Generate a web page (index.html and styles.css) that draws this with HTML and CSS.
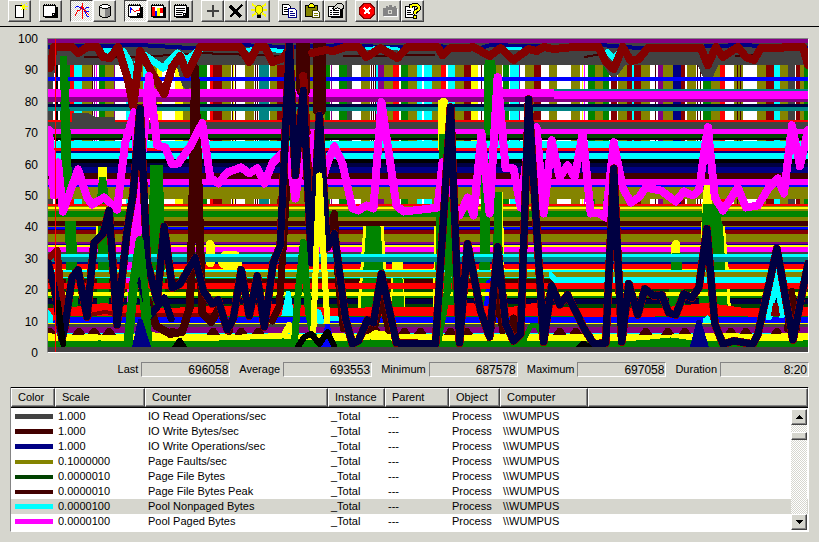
FILE: index.html
```html
<!DOCTYPE html>
<html lang="en">
<head>
  <meta charset="UTF-8">
  <meta name="viewport" content="width=device-width, initial-scale=1.0">
  <title>System Monitor</title>
  <link rel="stylesheet" href="styles.css">
</head>
<body>
  <div class="toolbar">
    <div class="group">
      <button aria-label="New counter set"><svg viewBox="0 0 16 16"><path fill="#fff" stroke="#000" d="M3.500 2.500h8v12h-8z"/><path fill="#ff0" d="M8 3h2v1H8zM10 2h2v4h-2zM12 1h1v6h-1zM13 3h3v1h-3zM9 0h1v1H9zM14 0h1v1h-1zM9 6h1v1H9zM14 6h1v1h-1z"/></svg></button>
    </div>
    <div class="group">
      <button aria-label="Clear display"><svg viewBox="0 0 16 16"><path d="M2 4h13v11H2z"/><path fill="#fff" stroke="#000" d="M.5 2.500h12v8l-3 3h-9z"/><path fill="none" stroke="#000" d="M9.500 13v-3h3"/><path stroke="#000" stroke-width="2" stroke-dasharray="1 1" d="M1 2h12"/></svg></button>
    </div>
    <div class="group">
      <button class="pressed" aria-label="View current activity"><svg viewBox="0 0 16 16"><path fill="none" stroke="#00f" d="M1 5l2-2 4 2 3 2 3 6 2 0M10 7l3-3 2 1M10 8l5 0"/><path fill="none" stroke="#f00" d="M1 13l3-6 2 0 2-4 4 6 3 3"/><path fill="#f00" d="M8 0h1v16H8z"/></svg></button>
      <button aria-label="View log data"><svg viewBox="0 0 16 16"><path fill="#848484" stroke="#000" d="M2.500 3.500l3-2h5l3 2v9l-3 2h-5l-3-2z"/><path fill="#d6d6ce" d="M3 5h5v9H5l-2-2z"/><path fill="#fff" stroke="#000" d="M2.500 3.500l3-2h5l3 2-3 2h-5z"/></svg></button>
    </div>
    <div class="group">
      <button class="pressed" aria-label="View graph"><svg viewBox="0 0 16 16"><path d="M2 4h13v11H2z"/><path fill="#fff" stroke="#000" d="M.5 2.500h12v8l-3 3h-9z"/><path fill="none" stroke="#000" d="M9.500 13v-3h3"/><path stroke="#000" stroke-width="2" stroke-dasharray="1 1" d="M1 2h12"/><path fill="none" stroke="#00f" d="M2.500 10V5l2 2"/><path fill="none" stroke="#f00" d="M4 6l3 3 2-2 2 1 1-3"/></svg></button>
      <button aria-label="View histogram"><svg viewBox="0 0 16 16"><path d="M2 4h13v11H2z"/><path fill="#fff" stroke="#000" d="M.5 2.500h12v11H.5z"/><path stroke="#000" stroke-width="2" stroke-dasharray="1 1" d="M1 2h12"/><path fill="#f00" d="M1 4h3v9H1zM9 5h3v5H9z"/><path fill="#00f" d="M4 8h2v5H4z"/><path fill="#ff0" d="M6 5h3v8H6z"/></svg></button>
      <button aria-label="View report"><svg viewBox="0 0 16 16"><path d="M2 4h13v11H2z"/><path fill="#fff" stroke="#000" d="M.5 2.500h12v8l-3 3h-9z"/><path fill="none" stroke="#000" d="M9.500 13v-3h3M2 5.500h9M2 7.500h9M2 9.500h7M2 11.500h6"/><path stroke="#000" stroke-width="2" stroke-dasharray="1 1" d="M1 2h12"/></svg></button>
    </div>
    <div class="group">
      <button aria-label="Add"><svg viewBox="0 0 16 16"><path fill="#424242" d="M7 2h2v5h5v2H9v5H7V9H2V7h5z"/></svg></button>
      <button aria-label="Delete"><svg viewBox="0 0 16 16"><path stroke="#000" stroke-width="3" d="M2 3l11 11"/><path stroke="#000" stroke-width="2" d="M14 2L8 8l-6 6"/></svg></button>
      <button aria-label="Highlight"><svg viewBox="0 0 16 16"><path stroke="#ff0" stroke-width="2" d="M1 1l4 3M15 1l-4 3M0 7h4M12 7h4M1 13l4-3M15 13l-4-3"/><path fill="#ff0" stroke="#848400" d="M4.500 4.500l2-2h3l2 2v4l-2 2v1h-3v-1l-2-2z"/><path d="M6 12h4v3H6z"/></svg></button>
    </div>
    <div class="group">
      <button aria-label="Copy properties"><svg viewBox="0 0 16 16"><path fill="#fff" stroke="#000" d="M.5 1.500h6l2 2v8h-8z"/><path stroke="#000" d="M2 4.500h3M2 6.500h5M2 8.500h5"/><path fill="#fff" stroke="#000084" d="M6.500 5.500h6l2 2v7h-8z"/><path stroke="#000084" d="M8 8.500h3M8 10.500h5M8 12.500h5"/></svg></button>
      <button aria-label="Paste counter list"><svg viewBox="0 0 16 16"><path fill="#848400" stroke="#000" d="M.5 2.500h12v11H.5z"/><path fill="#ff0" stroke="#000" d="M3.500 3.500v-1l2-2h2l2 2v2h-6z"/><path fill="#fff" stroke="#424200" d="M7.500 7.500h5l2 2v5h-7z"/><path stroke="#848400" d="M9 10.500h4M9 12.500h4"/></svg></button>
      <button aria-label="Properties"><svg viewBox="0 0 16 16"><path d="M3 5h12v10H3z"/><path fill="#fff" stroke="#000" d="M.5 3.500h12v10H.5z"/><path stroke="#000" d="M2 7.500h2M5 7.500h6M2 9.500h2M5 9.500h6M2 11.500h2M5 11.500h6"/><path fill="#d6d6ce" stroke="#000" d="M4.500 5.500l5-5h4l2 2v3l-3 1-3-2-3 2z"/></svg></button>
    </div>
    <div class="group">
      <button aria-label="Freeze display"><svg viewBox="0 0 16 16"><path fill="#f00" stroke="#840000" d="M5 .5h6L15.500 5v6L11 15.500H5L.5 11V5z"/><path stroke="#fff" stroke-width="2" d="M5 5l6 6M11 5l-6 6"/></svg></button>
      <button aria-label="Update data" disabled><svg viewBox="0 0 16 16"><path fill="#fff" d="M2 6h14v8H2z"/><path fill="#848484" d="M1 5h3V3h2v1h1V2h3v2h2V3h2v2h1v8H1z"/><path fill="#d6d6ce" d="M6 7h4v4H6z"/><path fill="#848484" d="M7 8h2v2H7z"/></svg></button>
      <button aria-label="Help"><svg viewBox="0 0 16 16"><path fill="#fff" stroke="#000" d="M.5 3.500h9v11h-9z"/><path stroke="#000" d="M2 7.500h4M2 9.500h4M2 11.500h6"/><path fill="none" stroke="#000" stroke-width="4" d="M6 5V3l2-1h4l2 2v2l-4 3v2"/><path fill="none" stroke="#ff0" stroke-width="2" d="M6 5V3l2-1h4l2 2v2l-4 3v2"/><path fill="#ff0" stroke="#000" d="M8.500 12.500h3v3h-3z"/></svg></button>
    </div>
  </div>

  <main class="monitor">
    <div class="chart">
      <div class="axis">
        <span>100</span><span>90</span><span>80</span><span>70</span><span>60</span><span>50</span><span>40</span><span>30</span><span>20</span><span>10</span><span>0</span>
      </div>
      <div class="plot">
        <svg id="graph" viewBox="48 39 759 312" preserveAspectRatio="none" role="img" aria-label="Counter graph"></svg>
      </div>
    </div>

    <div class="stats">
      <label for="last">Last</label><output id="last">696058</output>
      <label for="average">Average</label><output id="average">693553</output>
      <label for="minimum">Minimum</label><output id="minimum">687578</output>
      <label for="maximum">Maximum</label><output id="maximum">697058</output>
      <label for="duration">Duration</label><output id="duration">8:20</output>
    </div>

    <div class="legend">
      <table>
        <colgroup>
          <col class="c-color"><col class="c-scale"><col class="c-counter"><col class="c-instance"><col class="c-parent"><col class="c-object"><col class="c-computer"><col>
        </colgroup>
        <thead>
          <tr><th>Color</th><th>Scale</th><th>Counter</th><th>Instance</th><th>Parent</th><th>Object</th><th>Computer</th><th></th></tr>
        </thead>
        <tbody>
          <tr><td><i class="key gray"></i></td><td>1.000</td><td>IO Read Operations/sec</td><td>_Total</td><td>---</td><td>Process</td><td>\\WUMPUS</td><td></td></tr>
          <tr><td><i class="key maroon"></i></td><td>1.000</td><td>IO Write Bytes/sec</td><td>_Total</td><td>---</td><td>Process</td><td>\\WUMPUS</td><td></td></tr>
          <tr><td><i class="key navy"></i></td><td>1.000</td><td>IO Write Operations/sec</td><td>_Total</td><td>---</td><td>Process</td><td>\\WUMPUS</td><td></td></tr>
          <tr><td><i class="key thin olive"></i></td><td>0.1000000</td><td>Page Faults/sec</td><td>_Total</td><td>---</td><td>Process</td><td>\\WUMPUS</td><td></td></tr>
          <tr><td><i class="key thin green"></i></td><td>0.0000010</td><td>Page File Bytes</td><td>_Total</td><td>---</td><td>Process</td><td>\\WUMPUS</td><td></td></tr>
          <tr><td><i class="key thin maroon"></i></td><td>0.0000010</td><td>Page File Bytes Peak</td><td>_Total</td><td>---</td><td>Process</td><td>\\WUMPUS</td><td></td></tr>
          <tr class="selected"><td><i class="key cyan"></i></td><td>0.0000100</td><td>Pool Nonpaged Bytes</td><td>_Total</td><td>---</td><td>Process</td><td>\\WUMPUS</td><td></td></tr>
          <tr><td><i class="key magenta"></i></td><td>0.0000100</td><td>Pool Paged Bytes</td><td>_Total</td><td>---</td><td>Process</td><td>\\WUMPUS</td><td></td></tr>
        </tbody>
      </table>
      <div class="scrollbar">
        <button aria-label="Scroll up"><svg viewBox="0 0 7 4"><path d="M3 0h1v1h1v1h1v1h1v1H0V3h1V2h1V1h1z"/></svg></button>
        <div class="track"><div class="thumb"></div></div>
        <button aria-label="Scroll down"><svg viewBox="0 0 7 4"><path d="M0 0h7v1H6v1H5v1H4v1H3V3H2V2H1V1H0z"/></svg></button>
      </div>
    </div>
  </main>
  <script src="graph.js"></script>
</body>
</html>
```
FILE: styles.css
```css
* { box-sizing: border-box; }
body { margin: 0; height: 100vh; min-height: 420px; display: flex; flex-direction: column; background: #d6d6ce; color: #000; font: 11px/15px "Liberation Sans", Arial, sans-serif; }
svg { display: block; shape-rendering: crispEdges; }

.toolbar { display: flex; gap: 8px; height: 27px; padding-left: 8px; border-bottom: 1px solid #000; flex: none; }
.group { display: flex; }
.toolbar button { width: 23px; height: 22px; padding: 2px; border: 1px solid; border-color: #fff #424242 #424242 #fff; box-shadow: inset -1px -1px #848484; background: #d6d6ce; }
.toolbar button svg { width: 16px; height: 16px; margin: 0 auto; }
.toolbar .pressed { border-color: #424242 #fff #fff #424242; box-shadow: none; background: repeating-conic-gradient(#fff 0 25%, #d6d6ce 0 50%) 0 0 / 2px 2px; }

.monitor { flex: 1; min-height: 0; display: flex; flex-direction: column; padding: 11px 10px 10px; }
.chart { flex: 1; min-height: 0; display: flex; gap: 9px; }
.axis { width: 28px; margin: -5px 0 -6px; display: flex; flex-direction: column; justify-content: space-between; text-align: right; line-height: 12px; font-size: 12px; }
.plot { flex: 1; min-width: 0; border: 1px solid; border-color: #848484 #fff #fff #848484; }
.plot svg { width: 100%; height: 100%; background: #fff; }

.stats { display: flex; justify-content: flex-end; margin: 9px 0 10px; }
.stats label { margin: 0 3px 0 9px; white-space: nowrap; }
.stats output { width: 89px; height: 15px; padding-right: 1px; border: 1px solid; border-color: #848484 #fff #fff #848484; text-align: right; line-height: 14px; font-size: 12px; }

.legend { position: relative; border: 1px solid; border-color: #848484 #fff #fff #848484; background: #fff; padding-bottom: 2px; }
table { width: 100%; border-collapse: separate; border-spacing: 0; table-layout: fixed; }
th { height: 19px; padding: 0 6px; border: 1px solid; border-color: #fff #424242 #424242 #fff; box-shadow: inset -1px -1px #848484, 0 -1px #000, 0 1px #000; background: #d6d6ce; font-weight: normal; text-align: left; line-height: 15px; }
tbody::before { content: ""; display: block; height: 2px; }
td { height: 15px; padding: 0 3px; white-space: nowrap; }
.selected td { background: #d6d6ce; }
.c-color { width: 44px; }
.c-scale { width: 90px; }
.c-counter { width: 183px; }
.c-instance { width: 57px; }
.c-parent { width: 64px; }
.c-object { width: 51px; }
.c-computer { width: 88px; }
.key { display: block; width: 38px; height: 5px; margin-left: 1px; }
.thin { height: 4px; }
.gray { background: #424242; }
.maroon { background: #420000; }
.navy { background: #000084; }
.olive { background: #848400; }
.green { background: #004200; }
.cyan { background: #0ff; }
.magenta { background: #f0f; }

.scrollbar { position: absolute; top: 21px; right: 1px; bottom: 1px; width: 16px; display: flex; flex-direction: column; }
.scrollbar button, .thumb { border: 1px solid; border-color: #fff #424242 #424242 #fff; box-shadow: inset -1px -1px #848484; background: #d6d6ce; }
.scrollbar button { height: 16px; padding: 0; }
.scrollbar button svg { width: 7px; height: 4px; margin: 0 auto; }
.track { flex: 1; padding-top: 7px; background: repeating-conic-gradient(#fff 0 25%, #d6d6ce 0 50%) 0 0 / 2px 2px; }
.thumb { height: 8px; }
```
FILE: graph.js
```js
const C = {
  gray: '#424242', maroon: '#420000', red: '#ff0000', darkred: '#840000', navy: '#000084', ink: '#000042',
  blue: '#0000ff', cyan: '#00ffff', teal: '#008484', olive: '#848400', green: '#008400', forest: '#004200',
  yellow: '#ffff00', magenta: '#ff00ff', purple: '#840084', black: '#000000', white: '#ffffff'
};
const graph = document.getElementById('graph');

function add(tag, attrs) {
  const el = document.createElementNS('http://www.w3.org/2000/svg', tag);
  for (const key in attrs) el.setAttribute(key, attrs[key]);
  graph.appendChild(el);
}
function rect(color, x1, x2, y1, y2) {
  add('rect', { x: x1, y: y1, width: x2 - x1, height: y2 - y1, fill: C[color] });
}
function line(color, width, points) {
  add('polyline', { points, fill: 'none', stroke: C[color], 'stroke-width': width, 'stroke-linejoin': 'round', 'stroke-linecap': 'round' });
}
function area(color, points) {
  add('polygon', { points, fill: C[color] });
}

// spiky counters that run off the scale: color, from x, to x
const bars = [
  ['gray', 48, 53], ['black', 56, 58], ['green', 60, 70], ['red', 70, 74], ['cyan', 74, 82], ['olive', 82, 92],
  ['maroon', 92, 93], ['purple', 94, 95], ['magenta', 96, 97], ['green', 99, 105], ['olive', 105, 114], ['purple', 114, 115],
  ['cyan', 126, 134], ['olive', 134, 143], ['cyan', 143, 148], ['olive', 150, 160], ['yellow', 157, 162],
  ['yellow', 175, 183], ['olive', 183, 194], ['green', 199, 207], ['red', 210, 213], ['darkred', 213, 222], ['olive', 222, 231],
  ['maroon', 232, 233], ['yellow', 233, 234], ['maroon', 235, 236], ['olive', 245, 254], ['maroon', 255, 256], ['maroon', 257, 258],
  ['teal', 259, 269], ['olive', 270, 277], ['darkred', 277, 284], ['olive', 284, 325], ['green', 325, 330], ['purple', 331, 332],
  ['green', 339, 347], ['gray', 347, 352], ['olive', 361, 370], ['maroon', 371, 372], ['maroon', 373, 374], ['maroon', 375, 376],
  ['cyan', 376, 378], ['purple', 378, 384], ['olive', 384, 393], ['red', 393, 399], ['green', 401, 408], ['olive', 408, 417],
  ['cyan', 417, 422], ['cyan', 424, 431], ['olive', 431, 440], ['red', 440, 445], ['cyan', 447, 454], ['olive', 454, 463],
  ['darkred', 463, 470], ['yellow', 470, 477], ['maroon', 480, 481], ['green', 483, 495], ['olive', 495, 501], ['green', 502, 508],
  ['cyan', 509, 518], ['purple', 518, 519], ['olive', 524, 533], ['darkred', 533, 540], ['olive', 548, 556], ['olive', 570, 579],
  ['yellow', 581, 582], ['magenta', 583, 584], ['green', 587, 594], ['olive', 594, 602], ['green', 602, 608], ['darkred', 610, 616],
  ['olive', 617, 626], ['darkred', 626, 640], ['cyan', 631, 633], ['olive', 640, 649], ['maroon', 654, 655], ['purple', 657, 662],
  ['olive', 662, 672], ['navy', 672, 680], ['darkred', 680, 684], ['olive', 686, 695], ['maroon', 696, 697], ['maroon', 699, 700],
  ['green', 702, 710], ['olive', 710, 719], ['red', 719, 724], ['olive', 733, 742], ['maroon', 736, 737], ['maroon', 739, 740],
  ['olive', 756, 765], ['darkred', 765, 773], ['cyan', 773, 779], ['olive', 779, 787], ['gray', 787, 794], ['darkred', 795, 799],
  ['olive', 799, 803], ['green', 803, 807]
];

// flat counters: color, from y, to y
const bands = [
  ['purple', 39, 43], ['gray', 43, 65], ['blue', 77, 81], ['magenta', 89, 97], ['purple', 97, 102], ['ink', 104, 107],
  ['teal', 107, 111], ['red', 120, 122], ['gray', 122, 129], ['magenta', 129, 134], ['forest', 134, 138], ['black', 138, 140],
  ['cyan', 141, 148], ['red', 148, 151], ['navy', 151, 153], ['cyan', 153, 159], ['black', 159, 163], ['ink', 163, 167],
  ['navy', 167, 173], ['maroon', 173, 179], ['magenta', 179, 185], ['blue', 185, 187], ['olive', 187, 198], ['red', 203, 205],
  ['olive', 205, 210], ['yellow', 206, 208], ['green', 210, 216], ['olive', 216, 220], ['maroon', 220, 225], ['olive', 225, 226],
  ['blue', 226, 228], ['navy', 228, 229], ['darkred', 229, 233], ['olive', 233, 241], ['purple', 241, 243], ['navy', 243, 244],
  ['yellow', 244, 246], ['magenta', 246, 251], ['gray', 251, 253], ['navy', 261, 263], ['red', 263, 268], ['yellow', 268, 271],
  ['green', 276, 278], ['maroon', 278, 282], ['forest', 288, 291], ['green', 295, 297], ['black', 297, 298], ['ink', 298, 303],
  ['forest', 303, 307]
];
const frontBands = [
  ['cyan', 253, 256], ['teal', 256, 261], ['cyan', 269, 271], ['olive', 271, 276], ['cyan', 276, 277], ['red', 282, 288],
  ['yellow', 291, 295], ['red', 307, 315], ['green', 315, 316], ['blue', 316, 322], ['yellow', 322, 323], ['gray', 323, 326],
  ['purple', 326, 332], ['cyan', 332, 334], ['yellow', 333, 340], ['green', 340, 346]
];

bars.forEach(([color, x1, x2]) => rect(color, x1, x2, 65, 203));
line('gray', 10, '48,80 52,60');
line('gray', 10, '180,60 187,84 196,60');
line('gray', 10, '605,60 613,72 622,60');
line('gray', 10, '700,60 707,76 714,60');
bands.forEach(([color, y1, y2]) => rect(color, 48, 807, y1, y2));
rect('teal', 553, 807, 89, 91);
rect('magenta', 553, 807, 91, 99);
area('gray', '72,113 88,113 96,117 115,117 115,122 72,122');
line('navy', 4, '48,47 100,46 140,45 190,48 240,45 283,47 350,45 380,47 430,46 480,48 490,45 560,47 600,45 650,49 690,47 740,45 807,48');
line('maroon', 2, '85,57 140,57 200,53 280,56');
line('maroon', 2, '343,56 434,55');
line('maroon', 2, '584,57 600,54');
line('maroon', 2, '735,56 760,54');
line('cyan', 7, '106,51 123,51 129,62 134,80 140,52 150,59 163,68 177,53 187,60 200,49');
line('cyan', 4, '240,50 258,49 283,51');
line('cyan', 3, '365,49 381,47 398,49');
line('cyan', 3, '505,49 520,48');
line('cyan', 6, '607,52 613,58 619,52');
line('cyan', 4, '701,50 707,60 714,50');

// mid range counters sitting behind the flat ones
area('green', '60,56 67,56 71,140 72,195 62,195');
area('green', '65,220 76,220 78,310 67,310');
area('yellow', '98,167 107,167 107,180 98,180');
area('green', '99,177 106,177 109,198 97,198');
area('yellow', '96,225 98,225 97,250 95,250');
area('green', '98,225 108,225 109,310 97,310');
area('green', '150,165 163,165 165,310 147,310');
area('magenta', '134,190 144,190 142,230 127,310 126,268');
area('yellow', '363,225 383,225 389,310 357,310');
area('green', '366,225 380,225 386,310 360,310');
area('yellow', '392,261 402,261 405,310 389,310');
area('green', '393,277 402,277 404,310 391,310');
area('yellow', '434,225 440,225 440,310 432,310');
area('green', '436,200 457,200 458,310 434,310');
area('green', '481,160 489,160 490,310 478,310');
area('green', '484,60 494,60 494,135 483,135');
area('yellow', '495,192 502,192 505,310 493,310');
area('green', '494,192 501,192 503,310 491,310');
area('yellow', '438,100 447,100 447,150 437,150');
line('yellow', 9, '443,102 443,145');
area('green', '438,134 447,134 447,170 438,170');
line('yellow', 9, '210,244 210,262');
line('yellow', 12, '226,256 234,256 236,262 224,262');
line('yellow', 9, '675,244 675,264');
area('green', '671,252 680,252 685,310 667,310');
area('yellow', '703,185 710,185 712,225 724,225 728,271 730,310 698,310 701,210');
area('green', '702,203 716,203 722,225 727,310 698,310');
area('blue', '486,280 491,277 492,310 483,310');

frontBands.forEach(([color, y1, y2]) => rect(color, 48, 807, y1, y2));
area('cyan', '548,269 556,276 807,276 807,282 553,282 548,276');

// activity near the bottom of the scale
line('red', 8, '50,318 58,308 75,310 90,308 105,306 118,309 135,308 160,312 190,310 230,309 290,307 330,311 430,310 470,306 500,312 535,306 580,312 650,312 706,306 750,312 807,310');
line('darkred', 4, '85,315 105,311 120,314 150,314 215,314');
for (const x of [50, 79, 94, 109, 172, 213, 241, 258, 376, 404, 420, 450, 466, 513, 559, 575, 645, 667, 684, 730, 745, 776, 791]) {
  area('maroon', `${x - 7},334 ${x - 2},327 ${x + 2},327 ${x + 7},334`);
}
line('yellow', 6, '48,335 70,338 90,336 118,338 150,334 180,338 230,337 283,335 289,324 295,337 340,335 360,338 374,332 400,336 450,337 500,336 540,337 600,336 660,337 710,335 760,336 807,335');
line('green', 5, '48,343 100,342 150,344 220,342 283,340 340,343 370,341 430,344 522,342 530,325 537,325 545,343 640,342 670,339 700,343 807,342');
area('cyan', '48,308 53,315 53,322 48,322');
area('cyan', '281,315 286,290 290,290 294,315');
line('cyan', 7, '318,312 320,320');
line('cyan', 5, '331,318 337,318');
line('cyan', 7, '768,316 776,270 781,314');
area('darkred', '770,315 772,302 777,302 779,315');
area('cyan', '702,318 707,314 711,318 711,322 702,322');

line('darkred', 7, '48,258 57,250 62,300 64,325');
line('maroon', 8, '148,300 156,325 170,333 182,331 190,305 195,68 202,312 211,321 219,307 229,330');
line('maroon', 7, '272,320 279,305 284,230 288,160');
line('maroon', 14, '303,44 303,90');
line('maroon', 13, '319,44 319,110');
line('maroon', 7, '327,240 334,213 338,280 343,328');
line('maroon', 6, '367,330 375,325 381,300 388,330');
line('maroon', 7, '490,330 497,290 502,330');
line('maroon', 7, '510,330 513,317 516,330');
line('maroon', 6, '786,328 791,290 796,328');
line('darkred', 8, '303,76 307,145 314,200');
line('darkred', 8, '50,68 54,47 72,47 78,53 87,47 97,47 103,57 110,58 118,47 128,80 133,106 140,51 152,73 164,94 172,67 180,56 187,74 200,47 240,47 249,62 257,47 265,47 272,62 283,58 290,47');
line('darkred', 8, '312,53 325,50 333,51 345,47 358,47 366,57 380,48 397,58 407,47 437,47 442,55 450,48 467,48 473,47 489,56 500,48 513,60 528,49 536,51 543,47 553,49 573,47 598,47 605,62 613,69 622,47 630,61 638,59 647,48 700,48 707,65 715,47 722,57 737,47 745,57 753,60 760,48 802,47 807,65');

line('magenta', 8, '49,130 54,195 58,162 63,211 78,169 87,197 92,204 104,197 117,209 125,143 134,112 139,190 149,76 157,145 165,147 172,164 178,163 190,146 202,123 210,177 218,183 227,172 241,167 249,173 257,168 264,183 272,163 282,153 288,150 295,198 302,150 312,137 319,190 327,163 334,146 342,163 352,208 358,210 366,205 373,208 381,102 396,205 403,211 430,208 437,207 442,162 450,200 459,215 467,197 473,215 481,133 489,213 497,77 505,168 513,168 520,207 528,140 536,127 543,213 551,140 559,177 567,165 574,177 582,133 590,213 597,212 605,217 613,142 622,187 630,202 638,197 645,187 660,190 675,201 683,191 692,195 698,190 707,127 714,197 722,210 737,187 745,207 757,205 768,187 777,178 783,193 791,125 799,166 807,130');

const processor = '48,262 55,290 62,338 65,325 72,277 78,269 87,316 94,242 103,233 109,210 117,324 127,230 133,193 140,108 147,260 157,300 164,226 172,287 180,283 195,257 203,290 212,303 218,299 227,329 233,318 241,269 249,315 257,275 264,326 273,262 280,245 289,44 295,175 303,90 311,262 319,115 327,247 334,233 345,317 352,343 358,340 367,319 373,322 381,273 396,342 435,343 450,107 459,342 467,243 480,310 489,336 497,246 505,323 513,340 520,333 528,99 543,341 551,285 559,304 567,294 583,327 593,343 605,342 613,168 621,341 628,283 637,314 644,288 653,295 661,294 668,312 675,314 683,293 691,297 698,287 706,228 714,323 722,343 733,340 752,343 757,333 776,248 792,339 807,263';
line('green', 9, '128,342 134,280 140,240 144,300 148,342');
line('green', 7, '437,342 447,290 450,200 456,300');
line('darkred', 8, processor);
line('ink', 7, processor);
line('ink', 7, '140,280 150,315 164,297 171,318');
line('green', 7, '128,342 134,280 140,240 144,280 148,315');
line('green', 7, '294,343 298,290 303,242 308,310 313,335');
line('yellow', 6, '313,330 316,250 319,175 323,250 327,322');
area('navy', '132,346 138,318 142,318 151,346');
area('navy', '689,346 696,319 700,319 708,346');
area('blue', '320,346 325,323 329,323 335,346');
line('black', 6, '58,302 63,343');
line('black', 6, '298,345 304,336 311,333 319,343 327,331 334,345');
area('black', '172,346 178,337 181,337 187,346');
area('black', '575,346 581,340 585,340 592,346');

rect('gray', 48, 807, 346, 351);
rect('purple', 48, 807, 39, 43);
rect('red', 55, 56, 39, 351);
```
